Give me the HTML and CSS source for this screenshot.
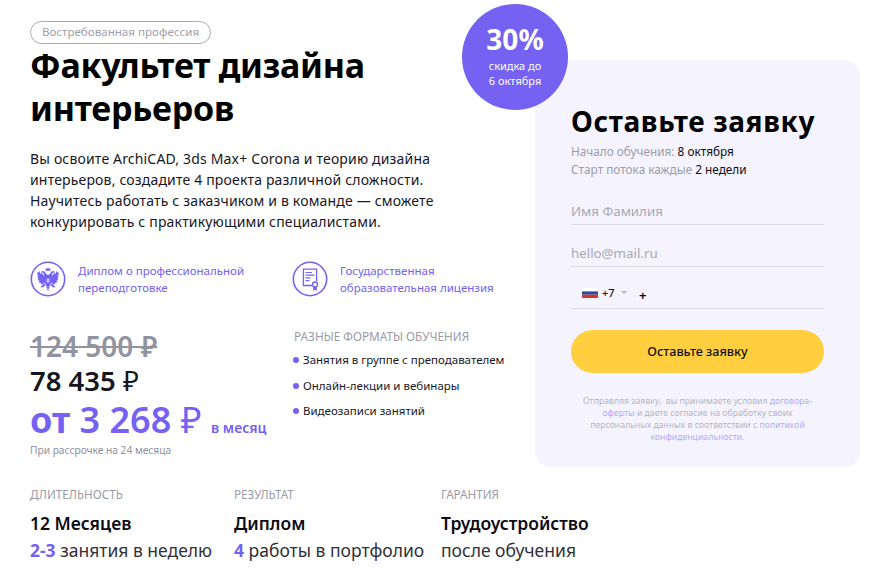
FILE: index.html
```html
<!DOCTYPE html>
<html lang="ru">
<head>
<meta charset="utf-8">
<title>Факультет дизайна интерьеров</title>
<link rel="stylesheet" href="styles.css">
</head>
<body>
<div class="page">
  <div class="hero">
    <section class="info">
      <span class="tag">Востребованная профессия</span>
      <h1 class="title">Факультет дизайна<br>интерьеров</h1>
      <p class="lead">Вы освоите ArchiCAD, 3ds Max+ Corona и теорию дизайна<br>интерьеров, создадите 4 проекта различной сложности.<br>Научитесь работать с заказчиком и в команде — сможете<br>конкурировать с практикующими специалистами.</p>
      <div class="features">
        <div class="feature feature-a">
          <svg class="ficon" viewBox="0 0 36 36" aria-hidden="true">
            <circle cx="18" cy="18" r="16.7" fill="none" stroke="#7561f2" stroke-width="1.6"/>
            <g fill="#7561f2" stroke="#7561f2" stroke-width="0.5" stroke-linejoin="round">
              <path d="M15.8 9.6L15.9 7.5 17 8.3 18 6.8 19 8.3 20.1 7.5 20.2 9.6Z"/>
              <path d="M14.8 14H21.2V22L18 24.5 14.8 22Z"/>
              <path d="M16 23L18 29.5 20 23Z"/>
              <g>
                <path d="M17.6 15C16.6 13 15.6 12.6 15 11.5 14.5 10.5 13.8 10.2 13 10.2L11.2 11.1 13 11.5C13.5 12.6 14.5 13.6 15.3 15Z"/>
                <path d="M16 14.5L13.5 14.8 12 12.6 10.2 13 9.6 10.6 7.4 12.2 7.6 13.8 8.6 14.6 7.6 16.2 8.9 17 8 18.9 9.7 19.5 9.2 21.6 11.1 21.5 11.1 23.1 13 22.5 16 20.5Z"/>
                <path d="M13.2 23L11 26.2 14 25.6 15.6 23.4Z"/>
              </g>
              <g transform="matrix(-1 0 0 1 36 0)">
                <path d="M17.6 15C16.6 13 15.6 12.6 15 11.5 14.5 10.5 13.8 10.2 13 10.2L11.2 11.1 13 11.5C13.5 12.6 14.5 13.6 15.3 15Z"/>
                <path d="M16 14.5L13.5 14.8 12 12.6 10.2 13 9.6 10.6 7.4 12.2 7.6 13.8 8.6 14.6 7.6 16.2 8.9 17 8 18.9 9.7 19.5 9.2 21.6 11.1 21.5 11.1 23.1 13 22.5 16 20.5Z"/>
                <path d="M13.2 23L11 26.2 14 25.6 15.6 23.4Z"/>
              </g>
            </g>
            <path fill="#c9c2fa" d="M16.6 17.5h2.8v3.4l-1.4 1.2-1.4-1.2z"/>
          </svg>
          <span class="ftext">Диплом о профессиональной<br>переподготовке</span>
        </div>
        <div class="feature">
          <svg class="ficon" viewBox="0 0 36 36" aria-hidden="true">
            <circle cx="18" cy="18" r="16.7" fill="none" stroke="#7561f2" stroke-width="1.6"/>
            <path fill="none" stroke="#7561f2" stroke-width="1.3" d="M20 24.5h-8.6V8.2h13.2v12"/>
            <path fill="none" stroke="#7561f2" stroke-width="1.2" d="M13.5 11.5h6.5M13.5 14.2h9M13.5 16.9h5M13.5 19.6h4"/>
            <circle cx="23" cy="23.5" r="2.5" fill="none" stroke="#7561f2" stroke-width="1.3"/>
            <path fill="#7561f2" d="M21.2 25.5h3.6v4.4l-1.8-1.2-1.8 1.2z"/>
          </svg>
          <span class="ftext">Государственная<br>образовательная лицензия</span>
        </div>
      </div>
      <div class="offer">
        <div class="prices">
          <div class="price-old">124 500 ₽</div>
          <div class="price-now">78 435 <span class="thin">₽</span></div>
          <div class="price-month"><span class="pm-from">от</span> 3 268 <span class="thin">₽</span> <span class="pm-unit">в месяц</span></div>
          <div class="price-note">При рассрочке на 24 месяца</div>
        </div>
        <div class="formats">
          <div class="formats-title">РАЗНЫЕ ФОРМАТЫ ОБУЧЕНИЯ</div>
          <ul class="formats-list">
            <li>Занятия в группе с преподавателем</li>
            <li>Онлайн-лекции и вебинары</li>
            <li>Видеозаписи занятий</li>
          </ul>
        </div>
      </div>
    </section>
    <aside class="card">
      <h2 class="card-title">Оставьте заявку</h2>
      <p class="meta">Начало обучения: <b>8 октября</b></p>
      <p class="meta">Старт потока каждые <b>2 недели</b></p>
      <div class="field field-first">Имя Фамилия</div>
      <div class="field">hello@mail.ru</div>
      <div class="field field-phone">
        <svg class="flag" viewBox="0 0 16 10" aria-hidden="true"><rect width="16" height="10" fill="#fff"/><rect y="3.4" width="16" height="3.3" fill="#2a4a9e"/><rect y="6.7" width="16" height="3.3" fill="#d5352e"/></svg>
        <span class="code">+7</span><span class="caret"></span><span class="plus">+</span>
      </div>
      <button class="submit" type="button">Оставьте заявку</button>
      <p class="legal">Отправляя заявку,&nbsp; вы принимаете условия <a>договора-</a><br><a>оферты</a> и даете согласие на обработку своих<br>персональных данных в соответствии с <a>политикой</a><br><a>конфиденциальности.</a></p>
    </aside>
  </div>
  <div class="facts">
    <div class="fact fact-1">
      <div class="fact-label">ДЛИТЕЛЬНОСТЬ</div>
      <div class="fact-title">12 Месяцев</div>
      <div class="fact-sub"><b>2-3</b> занятия в неделю</div>
    </div>
    <div class="fact fact-2">
      <div class="fact-label">РЕЗУЛЬТАТ</div>
      <div class="fact-title">Диплом</div>
      <div class="fact-sub"><b>4</b> работы в портфолио</div>
    </div>
    <div class="fact">
      <div class="fact-label">ГАРАНТИЯ</div>
      <div class="fact-title">Трудоустройство</div>
      <div class="fact-sub">после обучения</div>
    </div>
  </div>
  <div class="badge">
    <div class="badge-num">30%</div>
    <div class="badge-text">скидка до<br>6 октября</div>
  </div>
</div>
</body>
</html>
```
FILE: styles.css
```css
* { box-sizing: border-box; }
html, body { margin: 0; padding: 0; background: #fff; }
body { font-family: "Noto Sans", "Open Sans", sans-serif; color: #13131d; overflow: hidden; }
.page { position: relative; width: 874px; height: 581px; padding: 21px 14px 0 30px; }
.hero { display: flex; justify-content: space-between; height: 446px; }
.info { width: 490px; }
.tag { display: block; width: 181px; height: 23px; border: 1px solid #a9a9b6; border-radius: 12px; color: #a0a0ac; font-size: 11.6px; line-height: 20px; text-align: center; }
.title { margin: 0; font-size: 34px; line-height: 43px; font-weight: 700; color: #000; letter-spacing: -0.25px; }
.lead { margin: 18px 0 0; font-size: 14px; line-height: 21px; color: #17171f; letter-spacing: 0.17px; }
.features { display: flex; margin-top: 29px; }
.feature { display: flex; align-items: center; gap: 12px; }
.feature-a { width: 262px; }
.ficon { width: 36px; height: 36px; flex: none; }
.ftext { font-size: 11.5px; line-height: 17px; color: #7561f2; }
.offer { display: flex; margin-top: 32px; }
.prices { width: 264px; }
.price-old { font-size: 28px; line-height: 32px; margin-top: 1px; font-weight: 600; color: #9293a0; text-decoration: line-through; }
.price-now { font-size: 27.5px; line-height: 32px; margin-top: 3px; font-weight: 600; color: #16161f; }
.thin { font-weight: 400; }
.price-month { font-size: 36px; line-height: 44px; margin-top: 1px; font-weight: 600; color: #7561f2; white-space: nowrap; }
.pm-from { font-weight: 700; }
.pm-unit { font-size: 14px; line-height: 1; font-weight: 600; }
.price-note { font-size: 10.2px; line-height: 16px; color: #8f909c; }
.formats-title { font-size: 11.8px; line-height: 14px; color: #9a9ba8; }
.formats-list { list-style: none; margin: 9px 0 0; padding: 0; }
.formats-list li { position: relative; padding-left: 9px; font-size: 11.5px; line-height: 16px; margin-bottom: 9.5px; color: #17171f; white-space: nowrap; }
.formats-list li::before { content: ""; position: absolute; left: -1px; top: 5px; width: 6px; height: 6px; border-radius: 50%; background: #7561f2; }
.card { width: 325px; height: 407px; margin-top: 39px; padding: 42px 36px 0; background: #f5f4fe; border-radius: 16px; }
.card-title { margin: 0 0 2px; font-size: 28px; line-height: 38px; font-weight: 700; color: #000; letter-spacing: 0.65px; white-space: nowrap; }
.meta { margin: 0; font-size: 11.8px; line-height: 18px; color: #9b9ca8; }
.meta b { font-weight: 400; color: #0c0c18; }
.field { height: 42px; padding-top: 19px; border-bottom: 1px solid #dcdbe4; font-size: 13.3px; line-height: 18px; color: #a8a8b4; }
.field-first { height: 44px; margin-top: 3px; padding-top: 21px; }
.field-phone { display: flex; align-items: flex-start; position: relative; padding: 20px 0 0 11px; }
.flag { width: 16px; height: 10px; margin-top: 1px; }
.code { font-size: 11px; line-height: 12px; color: #111; margin-left: 4px; font-weight: 500; }
.caret { width: 0; height: 0; margin: 4px 0 0 6px; border: 3px solid transparent; border-top: 3px solid #b8b8c0; }
.plus { position: absolute; left: 68px; top: 21px; font-size: 13px; line-height: 14px; font-weight: 600; color: #000; }
.submit { display: block; width: 253px; height: 43px; margin-top: 21px; border: 0; border-radius: 22px; background: #ffcf3f; font-family: inherit; font-size: 12.6px; font-weight: 500; color: #111; }
.legal { margin: 22px 0 0; font-size: 8.7px; line-height: 12px; color: #b5b5c0; text-align: center; white-space: nowrap; }
.legal a { color: #b0acfa; }
.facts { display: flex; margin-top: 20px; }
.fact-1 { width: 204px; }
.fact-2 { width: 207px; }
.fact-label { font-size: 11.7px; line-height: 14px; color: #9a9ba8; }
.fact-title { font-size: 17.5px; line-height: 22px; margin-top: 11px; font-weight: 600; color: #0c0c14; white-space: nowrap; }
.fact-sub { font-size: 17.5px; line-height: 22px; margin-top: 5px; color: #30303a; white-space: nowrap; }
.fact-sub b { font-weight: 700; color: #7561f2; }
.badge { position: absolute; left: 462px; top: 4px; width: 106px; height: 106px; border-radius: 50%; background: #7561f2; color: #fff; text-align: center; padding-top: 19px; }
.badge-num { font-size: 28px; line-height: 33px; font-weight: 700; }
.badge-text { font-size: 11px; line-height: 15px; margin-top: 2px; }
```
